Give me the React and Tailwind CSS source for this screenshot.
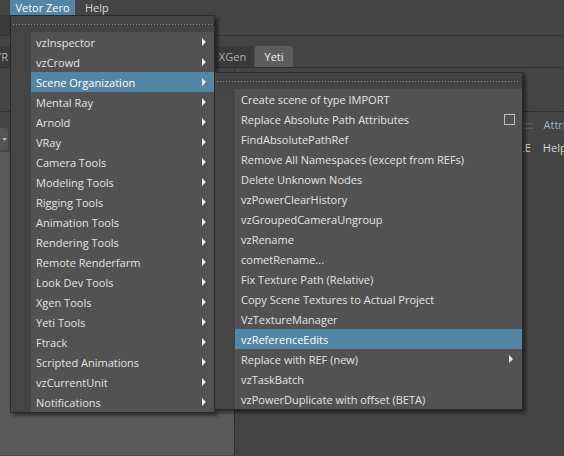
import React from 'react';

const mainItems = [
    'vzInspector',
    'vzCrowd',
    'Scene Organization',
    'Mental Ray',
    'Arnold',
    'VRay',
    'Camera Tools',
    'Modeling Tools',
    'Rigging Tools',
    'Animation Tools',
    'Rendering Tools',
    'Remote Renderfarm',
    'Look Dev Tools',
    'Xgen Tools',
    'Yeti Tools',
    'Ftrack',
    'Scripted Animations',
    'vzCurrentUnit',
    'Notifications',
];

const subItems = [
    { label: 'Create scene of type IMPORT' },
    { label: 'Replace Absolute Path Attributes', box: true },
    { label: 'FindAbsolutePathRef' },
    { label: 'Remove All Namespaces (except from REFs)' },
    { label: 'Delete Unknown Nodes' },
    { label: 'vzPowerClearHistory' },
    { label: 'vzGroupedCameraUngroup' },
    { label: 'vzRename' },
    { label: 'cometRename...' },
    { label: 'Fix Texture Path (Relative)' },
    { label: 'Copy Scene Textures to Actual Project' },
    { label: 'VzTextureManager' },
    { label: 'vzReferenceEdits', active: true },
    { label: 'Replace with REF (new)', sub: true },
    { label: 'vzTaskBatch' },
    { label: 'vzPowerDuplicate with offset (BETA)' },
];

const Arrow = () => (
    <svg width="4" height="8" viewBox="0 0 4 8" className="shrink-0">
        <path d="M0 0 L4 4 L0 8 Z" fill="#ececec" />
    </svg>
);

// dotted tear-off strip on top of every maya menu
const TearOff = () => (
    <div className="h-[16px] bg-[#444] flex items-center px-[2px]">
        <div className="h-px w-full bg-[repeating-linear-gradient(90deg,#8e8e8e_0_1px,transparent_1px_3px)]" />
    </div>
);

const MenuRow = ({ label, active, className, children }) => (
    <div
        className={`h-[20px] flex items-center justify-between whitespace-nowrap ${className} ${
            active ? 'bg-[#5285a6] text-white' : 'text-[#e4e4e4]'
        }`}
    >
        <span>{label}</span>
        {children}
    </div>
);

const App = () => {
    return (
        <div className="relative w-[564px] h-[456px] overflow-hidden bg-[#444] font-['Open_Sans',sans-serif] text-[11px] leading-none">
            {/* menu bar */}
            <div className="h-[15px] flex items-stretch bg-[#444] text-[#d6d6d6]">
                <div className="w-[10px] overflow-hidden flex items-center">
                    <span className="text-[#d04040] -ml-[6px]">E</span>
                </div>
                <div className="w-[65px] bg-[#5285a6] text-white flex items-center justify-center">Vetor Zero</div>
                <div className="px-[10px] flex items-center">Help</div>
            </div>

            {/* shelf strip */}
            <div className="h-[21px] flex border-b border-[#333]">
                <div className="w-[215px] bg-[#3a3a3a]" />
                <div className="flex-1 bg-[#444]" />
            </div>

            {/* shelf tabs */}
            <div className="h-[32px] flex items-end border-b border-[#2f2f2f] bg-[#444]">
                <div className="h-[21px] w-[10px] bg-[#3a3a3a] text-[#b0b0b0] flex items-center justify-end overflow-hidden">
                    <span className="shrink-0 pr-[2px]">YR</span>
                </div>
                <div className="w-[202px]" />
                <div className="h-[21px] w-[41px] bg-[#3a3a3a] text-[#b0b0b0] flex items-center justify-center">XGen</div>
                <div className="h-[21px] w-[38px] ml-[2px] rounded-t-[2px] bg-[#5d5d5d] text-[#f0f0f0] flex items-center justify-center">Yeti</div>
            </div>

            {/* work area */}
            <div className="flex h-[387px]">
                <div className="w-[235px] shrink-0 flex flex-col border-r border-[#2f2f2f]">
                    <div className="h-[44px] border-b border-[#2f2f2f]" />
                    <div className="h-[40px] flex items-center pt-[14px]">
                        <div className="h-[22px] w-[8px] rounded-r-[3px] bg-[#555] flex items-center justify-end pr-[1px]">
                            <svg width="5" height="3" viewBox="0 0 5 3">
                                <path d="M0 0 L5 0 L2.5 3 Z" fill="#bbb" />
                            </svg>
                        </div>
                    </div>
                    <div className="flex-1 bg-[#5a5a5a]" />
                </div>
                <div className="flex-1 min-w-0 flex flex-col overflow-hidden">
                    <div className="h-[44px] shrink-0 border-b border-[#2f2f2f]" />
                    <div className="h-[24px] shrink-0 flex items-center pl-[287px] text-[#9fb3c8]">
                        <span className="shrink-0 text-[#8a8a8a]">::::</span>
                        <span className="shrink-0 ml-[10px]">Attrib</span>
                    </div>
                    <div className="h-[22px] shrink-0 flex items-center pl-[284px] text-[#dadada]">
                        <span className="shrink-0">LE</span>
                        <span className="shrink-0 ml-[12px]">Help</span>
                    </div>
                    <div className="flex-1" />
                </div>
            </div>

            {/* Vetor Zero menu */}
            <div className="absolute left-[10px] top-[15px] w-[205px] border border-[#2a2a2a] shadow-[3px_3px_3px_rgba(0,0,0,0.45)]">
                <TearOff />
                <div className="flex">
                    <div className="w-[20px] bg-[#454545]" />
                    <div className="flex-1 bg-[#525252]">
                        {mainItems.map((item, i) => (
                            <MenuRow key={item} label={item} active={i === 2} className="pl-[5px] pr-[8px]">
                                <Arrow />
                            </MenuRow>
                        ))}
                    </div>
                </div>
            </div>

            {/* Scene Organization submenu */}
            <div className="absolute left-[214px] top-[72px] w-[309px] border border-[#2a2a2a] shadow-[3px_3px_3px_rgba(0,0,0,0.45)]">
                <TearOff />
                <div className="flex">
                    <div className="w-[20px] bg-[#454545]" />
                    <div className="flex-1 bg-[#525252]">
                        {subItems.map((item) => (
                            <MenuRow
                                key={item.label}
                                label={item.label}
                                active={item.active}
                                className={`pl-[6px] ${item.sub ? 'pr-[9px]' : 'pr-[7px]'}`}
                            >
                                {item.box && <div className="w-[11px] h-[11px] border border-[#bdbdbd]" />}
                                {item.sub && <Arrow />}
                            </MenuRow>
                        ))}
                    </div>
                </div>
            </div>
        </div>
    );
};

export default App;
